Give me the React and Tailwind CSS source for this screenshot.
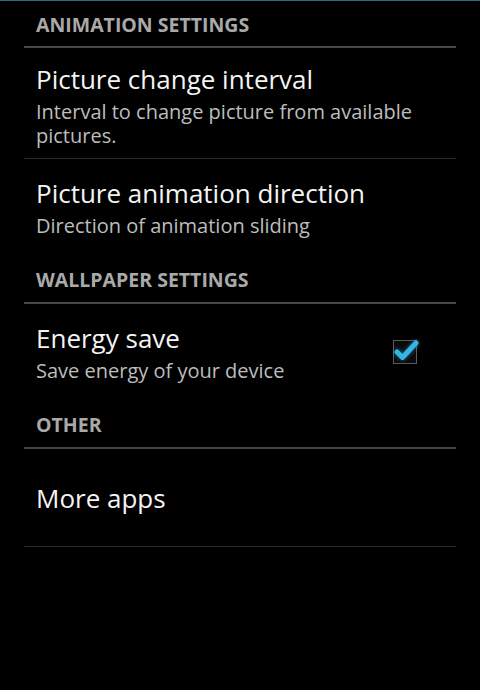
import React from "react";

const font = { fontFamily: '"Open Sans", "Noto Sans", "DejaVu Sans", sans-serif' };

function Header({ children, h = "h-[46px]" }) {
  return (
    <div>
      <div className={`${h} flex items-center pt-[3px] px-9`}>
        <span className="text-[19.5px] leading-[20px] font-bold text-[#a9a9a9]">{children}</span>
      </div>
      <div className="mx-6 h-[2px] bg-[#474747]" />
    </div>
  );
}

function Row({ title, summary, h, checkbox, pt = "" }) {
  return (
    <div className={`${h} flex items-center px-9 ${pt}`}>
      <div className="flex-1 min-w-0">
        <div className="text-[26px] leading-[34px] text-[#f4f4f4]">{title}</div>
        {summary && (
          <div className="mt-1 text-[20px] leading-[24px] text-[#bdbdbd] pr-6">{summary}</div>
        )}
      </div>
      {checkbox && (
        <div className="relative w-[24px] h-[24px] mr-[27px] border border-[#5a5a5a] bg-[#0a0a0a]">
          <svg
            className="absolute -left-[6px] -top-[10px] overflow-visible"
            width="34"
            height="34"
            viewBox="0 0 34 34"
          >
            <path
              d="M9 21 L14.5 26.5 L28 12"
              fill="none"
              stroke="#33b5e5"
              strokeWidth="5"
              strokeLinecap="round"
              strokeLinejoin="round"
              style={{ filter: "drop-shadow(0 0 2px rgba(51,181,229,0.6))" }}
            />
          </svg>
        </div>
      )}
    </div>
  );
}

export default function App() {
  return (
    <div className="w-[480px] h-[690px] bg-black overflow-hidden" style={font}>
      <div className="h-[1px] bg-[#2f6a88]" />
      <Header h="h-[45px]">ANIMATION SETTINGS</Header>
      <Row
        h="h-[110px]"
        pt="pt-[4px]"
        title="Picture change interval"
        summary="Interval to change picture from available pictures."
      />
      <div className="mx-6 h-[1px] bg-[#2a2a2a]" />
      <Row h="h-[96px]" title="Picture animation direction" summary="Direction of animation sliding" />
      <Header h="h-[47px]">WALLPAPER SETTINGS</Header>
      <Row h="h-[96px]" title="Energy save" summary="Save energy of your device" checkbox />
      <Header h="h-[47px]">OTHER</Header>
      <Row h="h-[97px]" title="More apps" />
      <div className="mx-6 h-[1px] bg-[#2a2a2a]" />
    </div>
  );
}
